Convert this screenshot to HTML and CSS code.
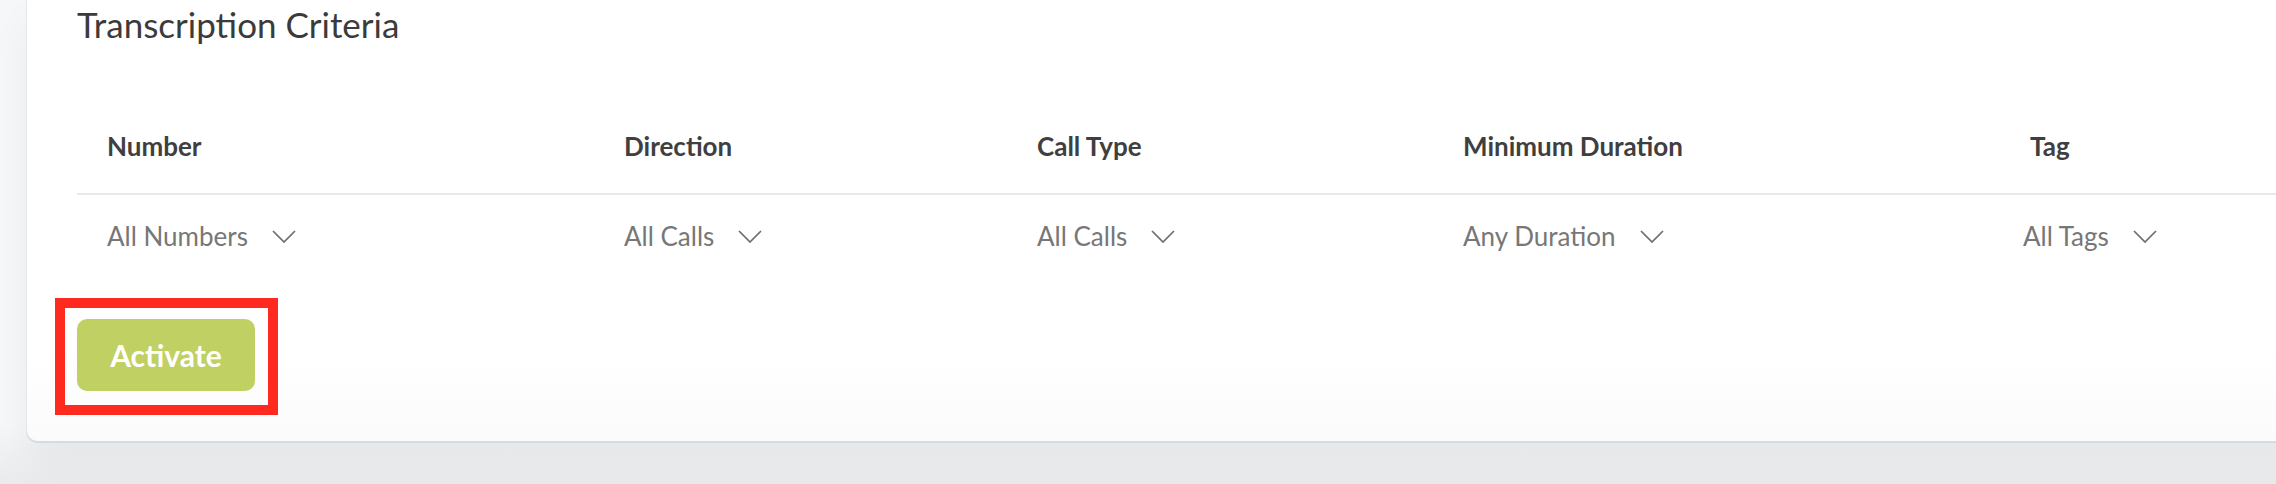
FILE: index.html
```html
<!DOCTYPE html>
<html lang="en">
<head>
    <meta charset="UTF-8">
    <meta name="viewport" content="width=device-width, initial-scale=1.0">
    <title>Transcription Criteria</title>
    <link rel="stylesheet" href="styles.css">
</head>
<body>
    <div id="page">
        <div id="criteria-card">
            <h2 class="card-title">Transcription Criteria</h2>

            <div class="criteria-grid">
                <div class="head-cell">Number</div>
                <div class="head-cell">Direction</div>
                <div class="head-cell">Call Type</div>
                <div class="head-cell">Minimum Duration</div>
                <div class="head-cell">Tag</div>

                <div class="value-cell">
                    <div class="select">All Numbers
                        <svg class="chevron" viewBox="0 0 24 13"><path d="M1 1 L12 12 L23 1"/></svg>
                    </div>
                </div>
                <div class="value-cell">
                    <div class="select">All Calls
                        <svg class="chevron" viewBox="0 0 24 13"><path d="M1 1 L12 12 L23 1"/></svg>
                    </div>
                </div>
                <div class="value-cell">
                    <div class="select">All Calls
                        <svg class="chevron" viewBox="0 0 24 13"><path d="M1 1 L12 12 L23 1"/></svg>
                    </div>
                </div>
                <div class="value-cell">
                    <div class="select">Any Duration
                        <svg class="chevron" viewBox="0 0 24 13"><path d="M1 1 L12 12 L23 1"/></svg>
                    </div>
                </div>
                <div class="value-cell">
                    <div class="select select-tag">All Tags
                        <svg class="chevron" viewBox="0 0 24 13"><path d="M1 1 L12 12 L23 1"/></svg>
                    </div>
                </div>
            </div>

            <div class="highlight">
                <button id="activate-btn">Activate</button>
            </div>
        </div>
    </div>
</body>
</html>
```

FILE: styles.css
```css
body, html {
    margin: 0;
    padding: 0;
    font-family: Lato, 'Open Sans', sans-serif;
    background-color: #f5f6f8;
}

#page {
    height: 484px;
    overflow: hidden;
    padding-left: 26px;
    background: linear-gradient(to bottom, #f6f7f9 0%, #f6f7f9 88%, #e9eaec 100%);
}

#criteria-card {
    width: calc(100% + 40px);
    height: 441px;
    box-sizing: border-box;
    background: linear-gradient(to bottom, #ffffff 80%, #fbfbfb 100%);
    border-left: 1px solid #e3e8ee;
    border-radius: 0 0 0 12px;
    box-shadow: 0 2px 0 #d3dce5, 0 22px 40px rgba(0, 0, 0, 0.05);
    padding: 3px 0 0 50px;
}

.card-title {
    margin: 0;
    font-size: 35px;
    font-weight: 400;
    line-height: 42px;
    color: #3b3b3b;
}

.criteria-grid {
    display: grid;
    grid-template-columns: 517px 413px 426px 567px 1fr;
    margin-top: 85px;
}

.head-cell {
    padding: 0 0 31px 30px;
    font-size: 26px;
    font-weight: 700;
    line-height: 32px;
    color: #3f3f3f;
    border-bottom: 2px solid #e9e9e9;
}

.value-cell {
    padding: 25px 0 0 30px;
    grid-row: 2;
}

.select {
    display: flex;
    align-items: center;
    gap: 24px;
    font-size: 26px;
    line-height: 32px;
    color: #777777;
}

.select-tag {
    margin-left: -7px;
}

.chevron {
    width: 24px;
    height: 13px;
    fill: none;
    stroke: #6e6e6e;
    stroke-width: 1.7;
}

/* red annotation box around the button */
.highlight {
    display: flex;
    width: fit-content;
    margin: 46px 0 0 -22px;
    padding: 11px 13px 14px 12px;
    border: 10px solid #fe2a1f;
}

#activate-btn {
    width: 178px;
    height: 72px;
    border: none;
    border-radius: 10px;
    background-color: #c0d062;
    color: white;
    font-family: inherit;
    font-size: 30px;
    font-weight: 700;
    cursor: pointer;
}
```
